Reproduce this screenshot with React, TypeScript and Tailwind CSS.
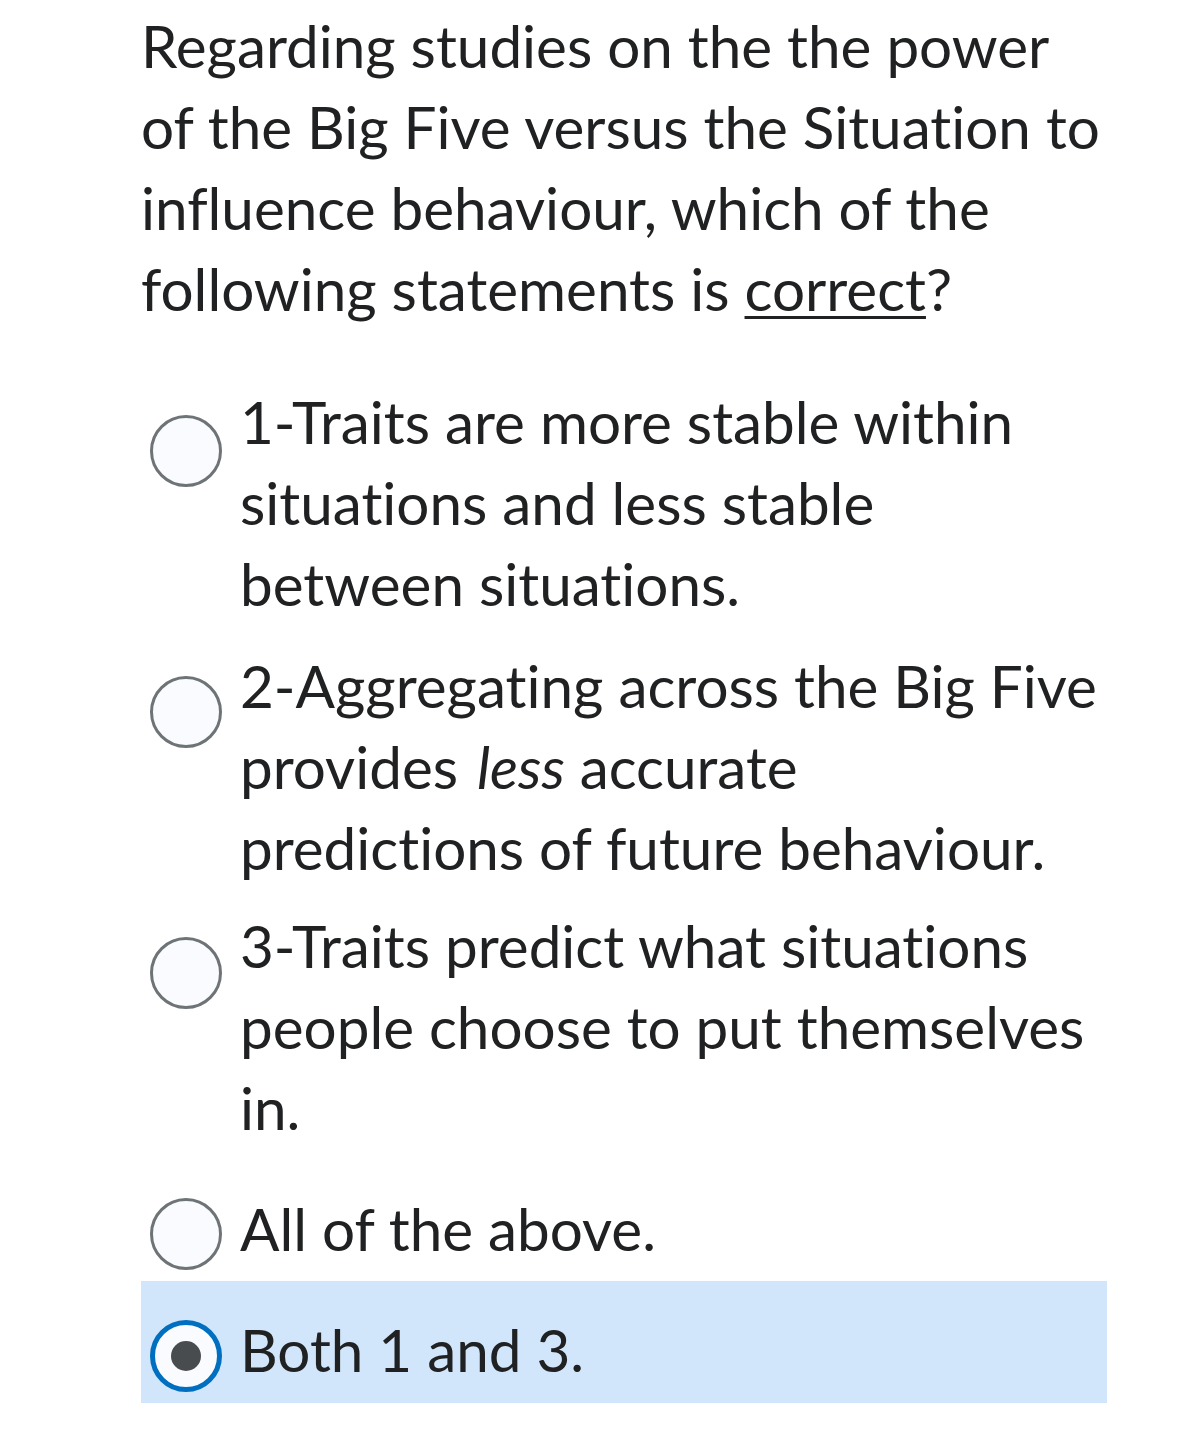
const options = [
  { id: 1, mt: "mt-[52px]", radioMt: "mt-[34px]", label: <>1-Traits are more stable within situations and less stable between situations.</> },
  {
    id: 2,
    mt: "mt-[21px]",
    radioMt: "mt-[31px]",
    label: (
      <>
        2-Aggregating across the Big Five provides <em className="pl-[4px]">less</em> accurate
        <br />
        predictions of future behaviour.
      </>
    ),
  },
  { id: 3, mt: "mt-[17px]", radioMt: "mt-[32px]", label: <>3-Traits predict what situations people choose to put themselves in.</> },
  { id: 4, mt: "mt-[40px]", radioMt: "mt-[10px]", label: <>All of the above.</> },
];

function Radio({ checked, className }: { checked?: boolean; className: string }) {
  if (checked) {
    return (
      <span className={`flex h-[72px] w-[72px] shrink-0 items-center justify-center rounded-full border-[5px] border-[#006fbf] bg-[#f9fbff] ${className}`}>
        <span className="h-[30px] w-[30px] rounded-full bg-[#494c4e]" />
      </span>
    );
  }
  return <span className={`h-[72px] w-[72px] shrink-0 rounded-full border-[3px] border-[#6e7376] bg-[#f9fbff] ${className}`} />;
}

export default function App() {
  return (
    <div className="min-h-[1439px] bg-white text-[#202122] font-['Lato','Liberation_Sans',sans-serif] text-[58.4px] leading-[81px] [font-variant-ligatures:none]">
      <div className="w-[1107px] pl-[141px] pt-[5px]">
        <p>
          Regarding studies on the the power of the Big Five versus the Situation to influence behaviour, which of the following statements is{" "}
          <span className="underline decoration-[3px] underline-offset-[5px]">correct</span>?
        </p>
        <div className="flex flex-col">
          {options.map((o) => (
            <label key={o.id} className={`flex items-start gap-[18px] pl-[9px] ${o.mt}`}>
              <Radio className={o.radioMt} />
              <span>{o.label}</span>
            </label>
          ))}
          <label className="mt-[11px] flex items-start gap-[18px] bg-[#d1e6fa] pl-[9px] pt-[28px] pb-[11px]">
            <Radio checked className="mt-[11px]" />
            <span>Both 1 and 3.</span>
          </label>
        </div>
      </div>
    </div>
  );
}
